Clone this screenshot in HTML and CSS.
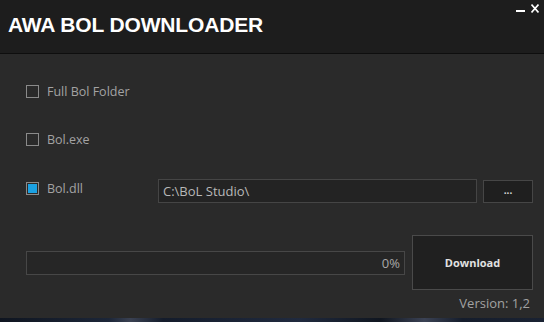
FILE: index.html
```html
<!DOCTYPE html>
<html>
<head>
<meta charset="utf-8">
<link rel="stylesheet" href="styles.css">
</head>
<body>
<div class="window">
  <header class="titlebar">
    <h1 class="title">AWA BOL DOWNLOADER</h1>
    <div class="controls">
      <span class="minimize"></span>
      <svg class="close" width="8" height="9" viewBox="0 0 8 9"><path d="M0.5 0.5 L7.5 8.5 M7.5 0.5 L0.5 8.5" stroke="#ffffff" stroke-width="1.6" fill="none"/></svg>
    </div>
  </header>
  <main class="content">
    <div class="row">
      <label class="check"><span class="box"></span><span class="label">Full Bol Folder</span></label>
    </div>
    <div class="row">
      <label class="check"><span class="box"></span><span class="label">Bol.exe</span></label>
    </div>
    <div class="row path-row">
      <label class="check wide"><span class="box checked"></span><span class="label">Bol.dll</span></label>
      <div class="path-input">C:\BoL Studio\</div>
      <button class="browse">...</button>
    </div>
    <div class="action-row">
      <div class="progress"><span class="percent">0%</span></div>
      <button class="download">Download</button>
    </div>
    <div class="version">Version: 1,2</div>
  </main>
  <div class="backdrop"></div>
</div>
</body>
</html>
```
FILE: styles.css
```css
html, body {
  margin: 0;
  padding: 0;
  background: #141a26;
}
.window {
  width: 544px;
  height: 322px;
  display: flex;
  flex-direction: column;
  background: #2a2a2a;
  font-family: "Open Sans", "Noto Sans", sans-serif;
}
.titlebar {
  box-sizing: border-box;
  background: #1d1d1d;
  border-bottom: 1px solid #0e0e0e;
  display: flex;
  justify-content: space-between;
  align-items: flex-start;
  padding: 0 5px 0 8px;
  flex: none;
  height: 54px;
}
.title {
  margin: 13px 0 0 0;
  font-family: "Liberation Sans", Arial, sans-serif;
  font-weight: bold;
  font-size: 21px;
  line-height: 24px;
  color: #ffffff;
  letter-spacing: -0.15px;
}
.controls {
  display: flex;
  align-items: flex-start;
  gap: 6px;
  padding-top: 4px;
}
.minimize {
  display: block;
  width: 9px;
  height: 2px;
  background: #ffffff;
  margin-top: 6px;
}
.close {
  display: block;
}
.content {
  flex: 1;
  display: flex;
  flex-direction: column;
  padding: 31px 11px 0 26px;
}
.row {
  display: flex;
  align-items: flex-start;
  height: 13px;
  margin-bottom: 35px;
}
.path-row {
  height: 24px;
  margin-top: -2px;
  margin-bottom: 0;
}
.check {
  display: flex;
  align-items: center;
  gap: 8px;
  height: 13px;
}
.check.wide {
  width: 132px;
  flex: none;
  margin-top: 3px;
}
.box {
  width: 13px;
  height: 13px;
  box-sizing: border-box;
  border: 1px solid #8a8a8a;
  flex: none;
}
.box.checked {
  background: #1ba1e2;
  box-shadow: inset 0 0 0 1px #2a2a2a;
}
.label {
  font-size: 12.5px;
  color: #a3a3a3;
  line-height: 13px;
}
.path-input {
  width: 319px;
  height: 24px;
  box-sizing: border-box;
  background: #232323;
  border: 1px solid #454545;
  color: #b8b8b8;
  font-size: 13px;
  line-height: 22px;
  padding-left: 4px;
  flex: none;
}
.browse {
  margin: 1px 0 0 6px;
  width: 50px;
  height: 23px;
  box-sizing: border-box;
  background: #1f1f1f;
  border: 1px solid #464646;
  color: #d8d8d8;
  font-family: "Open Sans", sans-serif;
  font-size: 10px;
  font-weight: bold;
  padding: 0 0 3px 0;
  line-height: 10px;
}
.action-row {
  display: flex;
  align-items: center;
  margin-top: 32px;
  gap: 7px;
}
.progress {
  width: 379px;
  height: 24px;
  box-sizing: border-box;
  border: 1px solid #474747;
  background: #262626;
  display: flex;
  align-items: center;
  justify-content: flex-end;
  padding-right: 4px;
}
.percent {
  font-size: 13px;
  color: #a8a8a8;
}
.download {
  width: 121px;
  height: 55px;
  box-sizing: border-box;
  background: #202020;
  border: 1px solid #4a4a4a;
  color: #e2e2e2;
  font-family: "Open Sans", sans-serif;
  font-weight: bold;
  font-size: 11px;
  padding: 0;
}
.version {
  align-self: flex-end;
  margin: 4px 3px 0 0;
  font-size: 13px;
  color: #a2a2a2;
  line-height: 19px;
}
.backdrop {
  height: 4px;
  flex: none;
  background: linear-gradient(90deg, #0f1520 0%, #1c2638 20%, #3a4152 24%, #141c2b 30%, #202a3e 55%, #101620 70%, #3b4254 78%, #151d2c 85%, #1a2232 100%);
}
```
